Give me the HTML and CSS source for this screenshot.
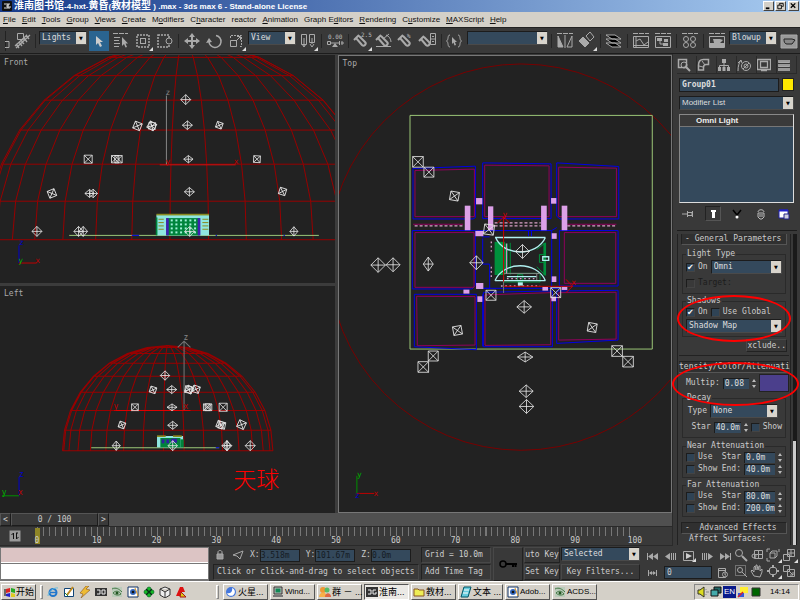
FILE: index.html
```html
<!DOCTYPE html>
<html lang="zh-CN">
<head>
    <meta charset="UTF-8">
    <meta name="viewport" content="width=device-width, initial-scale=1.0">
    <title>3ds max 6 - Stand-alone License</title>
    <link rel="stylesheet" href="styles.css">
</head>
<body>
<header class="titlebar">
    <svg class="app-icon" viewBox="0 0 10 10"><rect width="10" height="10" rx="1" fill="#111"/><path d="M2 3h4v4H2M4 5h2M8 3H6v4h2V5" fill="none" stroke="#ddd"/></svg>
    <h1><span class="cjk">淮南图书馆</span>-4-hxt-<span class="cjk">黄昏</span>(<span class="cjk">教材模型</span> ) .max - 3ds max 6 - Stand-alone License</h1>
    <div class="window-buttons">
        <button aria-label="Minimize"><svg viewBox="0 0 10 9"><path d="M2 7h4" stroke="#000" stroke-width="2"/></svg></button>
        <button aria-label="Restore"><svg viewBox="0 0 10 9"><path d="M4 3V1.500h4v3.500H7M2 3.500h4v4H2z" fill="none" stroke="#000"/></svg></button>
        <button class="close" aria-label="Close"><svg viewBox="0 0 10 9"><path d="M2 1.500l5 5M7 1.500l-5 5" stroke="#000" stroke-width="1.500"/></svg></button>
    </div>
</header>

<nav class="menubar">
    <a href="#"><u>F</u>ile</a>
    <a href="#"><u>E</u>dit</a>
    <a href="#"><u>T</u>ools</a>
    <a href="#"><u>G</u>roup</a>
    <a href="#"><u>V</u>iews</a>
    <a href="#"><u>C</u>reate</a>
    <a href="#">M<u>o</u>difiers</a>
    <a href="#">C<u>h</u>aracter</a>
    <a href="#">reactor</a>
    <a href="#"><u>A</u>nimation</a>
    <a href="#">Graph E<u>d</u>itors</a>
    <a href="#"><u>R</u>endering</a>
    <a href="#">C<u>u</u>stomize</a>
    <a href="#"><u>M</u>AXScript</a>
    <a href="#"><u>H</u>elp</a>
</nav>

<div class="toolbar">
    <svg class="handle" viewBox="0 0 6 20"><path d="M1.500 0v20" stroke="#222"/><path d="M1 10.500h4v6H1" fill="none" stroke="#aaa"/></svg>
    <button aria-label="Select and link"><svg viewBox="0 0 20 20"><path d="M5.500 2.500h6v6h-6z"/><path d="M4 17l14-13M4 13l3 4M7 11l3 4M9 9l3 4M12 7l3 4M14 4l3 4M3 15l12-11" stroke-width="1.300"/></svg></button>
    <i class="sep"></i>
    <span class="combo combo-filter"><select aria-label="Selection filter"><option>Lights</option></select></span>
    <button class="active" aria-label="Select object"><svg viewBox="0 0 20 20"><path d="M7 5v9l2-2 2 4 2-1-2-4h3z" fill="#ccc" stroke="none"/></svg></button>
    <button aria-label="Select by name"><svg viewBox="0 0 20 20"><path d="M2 2.500h5m1 0h5m1 0h3M3 6.500h6M3 9.500h5M3 12.500h6M3 15.500h5"/><path d="M11 6v9l2-2 1.500 3.500 1.500-.5-1.500-3.500h2.500z" fill="#aaa" stroke="none"/></svg></button>
    <button class="flyout" aria-label="Rectangular region"><svg viewBox="0 0 20 20"><rect x="4" y="4" width="12" height="12" stroke-dasharray="2 1" stroke-width="1.500"/><rect x="7.500" y="7.500" width="5" height="5"/></svg></button>
    <button aria-label="Window crossing"><svg viewBox="0 0 20 20"><rect x="3" y="4" width="11" height="12" stroke-dasharray="2 1" stroke-width="1.500"/><circle cx="14" cy="10" r="3" fill="#393939"/></svg></button>
    <i class="sep"></i>
    <button aria-label="Select and move"><svg viewBox="0 0 20 20"><path d="M10 4v12M4 10h12" stroke-width="2"/><path d="M10 2l3 4H7zM10 18l3-4H7zM2 10l4-3v6zM18 10l-4-3v6z" fill="#aaa" stroke="none"/></svg></button>
    <button aria-label="Select and rotate"><svg viewBox="0 0 20 20"><path d="M12 4.500a6 6 0 1 1-7 6" stroke-width="1.500"/><path d="M2 12l3-5 3 4z" fill="#aaa" stroke="none"/></svg></button>
    <button class="flyout" aria-label="Select and scale"><svg viewBox="0 0 20 20"><path d="M4.500 9.500h6v6h-6z"/><path d="M4.500 7V4.500h11v11H13" stroke-dasharray="2 1"/><path d="M10 10l4-4M11 5.500h3.500V9"/></svg></button>
    <span class="combo combo-filter"><select aria-label="Reference coordinate system"><option>View</option></select></span>
    <button class="flyout" aria-label="Use pivot point center"><svg viewBox="0 0 20 20"><path d="M3.500 3.500h5v10h-5zM11.500 3.500h5v8h-5z"/><path d="M6 7v8M4 13l2 3 2-3M14 7v6M12 13l2 3 2-3"/></svg></button>
    <i class="sep"></i>
    <button aria-label="Select and manipulate"><svg viewBox="0 0 20 20"><text x="3" y="8">0.00</text><path d="M2.500 10.500h3v3h-3zM6 12h8M14.500 10v4M17 10v4M16 12h3"/><path d="M10 12l3 4H7z" fill="#aaa" stroke="none"/></svg></button>
    <i class="sep"></i>
    <button class="flyout" aria-label="Snap toggle"><svg viewBox="0 0 20 20"><path d="M4 7l6 7c2 2 5-1 3-3L7 5M2 9l5-5" stroke-width="2"/><text x="9" y="6">2.5</text></svg></button>
    <button aria-label="Angle snap"><svg viewBox="0 0 20 20"><path d="M4 7l6 7c2 2 5-1 3-3L7 5M2 9l5-5" stroke-width="2"/><path d="M2 15.500h15M9 8l6-5M12 4c3 1 5 4 5 7"/></svg></button>
    <button aria-label="Percent snap"><svg viewBox="0 0 20 20"><path d="M4 7l6 7c2 2 5-1 3-3L7 5M2 9l5-5" stroke-width="2"/><text x="11" y="7">%</text></svg></button>
    <button aria-label="Spinner snap"><svg viewBox="0 0 20 20"><path d="M3 8l5 6c2 2 5-1 3-3L6 6M1 10l5-5" stroke-width="2"/><path d="M12.500 2.500h5v11h-5zM12.500 8h5M14 6l1-1 1 1M14 10l1 1 1-1"/></svg></button>
    <i class="sep"></i>
    <button aria-label="Named selection sets"><svg viewBox="0 0 20 20"><path d="M5 4c-3 0-1 5-3.500 6 2.500 1 .5 6 3.500 6M13 4c3 0 1 5 3.500 6-2.500 1-.5 6-3.500 6"/><path d="M7 6v7l1.500-1.500 1 3 1.500-.5-1-3h2z" fill="#aaa" stroke="none"/></svg></button>
    <span class="combo combo-wide"><select aria-label="Selection set"><option></option></select></span>
    <i class="sep"></i>
    <button aria-label="Mirror"><svg viewBox="0 0 20 20"><path d="M2 2.500h5m1 0h5m1 0h4M10 4v13"/><path d="M3 5l5 11H3z" fill="#aaa"/><path d="M17 5l-5 11h5z"/></svg></button>
    <button class="flyout" aria-label="Align"><svg viewBox="0 0 20 20"><path d="M2 10l4-4 6 6-4 4z" fill="#aaa"/><path d="M9 5l4-4 4 5-4 4z"/></svg></button>
    <i class="sep"></i>
    <button aria-label="Layer manager"><svg viewBox="0 0 20 20"><path d="M2 12h9l6 4H8zM2 8h9l6 4H8zM2 4h9l6 4H8z" fill="#000" stroke="#aaa"/></svg></button>
    <i class="sep"></i>
    <button aria-label="Curve editor"><svg viewBox="0 0 20 20"><path d="M2 2.500h5m1 0h5m1 0h4M2.500 5.500h15v11h-15zM5 5v11M5 10l4-2 4 6 4-3M3 14.500h14"/></svg></button>
    <button aria-label="Schematic view"><svg viewBox="0 0 20 20"><path d="M2 2.500h5m1 0h5m1 0h4M2.500 5.500h15v11h-15zM7 9v4h4"/><path d="M4 7h5v3H4zM11 8h4v3h-4zM10 12h5v3h-5z" fill="#aaa" stroke="none"/></svg></button>
    <i class="sep"></i>
    <button aria-label="Material editor"><svg viewBox="0 0 20 20"><path d="M2 2.500h5m1 0h5m1 0h4"/><circle cx="6" cy="8" r="2.500"/><circle cx="13" cy="8" r="2.500"/><circle cx="6" cy="14" r="2.500"/><circle cx="13" cy="14" r="2.500"/></svg></button>
    <i class="sep"></i>
    <button aria-label="Render scene"><svg viewBox="0 0 20 20"><path d="M2 2.500h5m1 0h5m1 0h4M2.500 5.500h15v11h-15z"/><path d="M3 12h14v4H3zM6 8h7l3 1-3 3H7z" fill="#aaa" stroke="none"/></svg></button>
    <span class="combo combo-filter"><select aria-label="Render type"><option>Blowup</option></select></span>
    <button aria-label="Quick render"><svg viewBox="0 0 20 20"><path d="M2 4h16v13H2z" fill="#999"/><path d="M5 8h8l3 1-3 4H8c-3 0-3-4-3-5z" stroke="#222" fill="#888"/></svg></button>
</div>

<main class="workspace">
    <section class="stage">
        <div class="views">
            <div class="view"><span class="view-name">Front</span><svg class="scene" id="front" viewBox="0 0 1005 687" preserveAspectRatio="xMinYMin slice"></svg></div>
            <div class="view"><span class="view-name">Left</span><svg class="scene" id="left" viewBox="0 3 1005 681" preserveAspectRatio="xMinYMin slice"></svg></div>
            <div class="view view-top"><span class="view-name">Top</span><svg class="scene" id="top" viewBox="-63 -135 996 1374"></svg></div>
        </div>
        <div class="time-slider">
            <button aria-label="Previous frame">&lt;</button>
            <button class="thumb">0 / 100</button>
            <button aria-label="Next frame">&gt;</button>
        </div>
        <div class="trackbar">
            <button class="mini-curve" aria-label="Mini curve editor"><svg viewBox="0 0 12 12"><path d="M.5.500h11v11H.5z" fill="#999"/><path d="M4.500 9V3M2.500 5l2-2M7.500 3v6M9.500 7l-2 2M7 3h2" stroke="#111" fill="none"/></svg></button>
            <div class="ruler">
                <div class="ticks"></div>
                <i class="time-mark"></i>
                <div class="numbers"><span>0</span><span>10</span><span>20</span><span>30</span><span>40</span><span>50</span><span>60</span><span>70</span><span>80</span><span>90</span><span>100</span></div>
            </div>
        </div>
    </section>

    <aside class="panel">
        <div class="panel-tabs">
            <button aria-label="Create"><svg viewBox="0 0 14 14"><path d="M1.500 1.500h8v8h-8z" stroke-width="1.500"/><circle cx="7" cy="7" r="3"/><path d="M8 8l5 5" stroke-width="2"/></svg></button>
            <button aria-label="Modify"><svg viewBox="0 0 14 14"><path d="M1.500 12V7c0-4 2-5.500 5-5.500h5v5H9c-2 0-2.500 1-2.500 3V12z" stroke-width="1.500"/><path d="M2 8l4 1M5 3l3 4"/></svg></button>
            <button aria-label="Hierarchy"><svg viewBox="0 0 14 14"><path d="M7 4v6M2.500 10V7.500h9V10"/><path d="M5 1h4v4H5zM1 9h3v4H1zM5.500 9h3v4h-3zM10 9h3v4h-3z" fill="#aaa" stroke="none"/></svg></button>
            <button aria-label="Motion"><svg viewBox="0 0 14 14"><circle cx="9" cy="8" r="4.500"/><circle cx="9" cy="8" r="2"/><path d="M6 11l6-6M1 13c0-5 1-8 3-11M1 5l3-3 1 3"/></svg></button>
            <button aria-label="Display"><svg viewBox="0 0 14 14"><path d="M.5 1.500h13v10H.5zM3.500 3.500h7v6h-7zM4 12.500h6" stroke-width="1.300"/></svg></button>
            <button aria-label="Utilities"><svg viewBox="0 0 14 14"><path d="M1 2h12v3H1zM1 6h12v3H1zM1 10h12v3H1z" fill="#999" stroke="none"/><path d="M2 4.500h10M2 8.500h10"/></svg></button>
        </div>
        <div class="object-name">
            <input type="text" value="Group01" aria-label="Object name">
            <button class="swatch yellow" aria-label="Object color"></button>
        </div>
        <span class="combo modifier-list"><select aria-label="Modifier list"><option>Modifier List</option></select></span>
        <div class="stack"><div class="stack-item">Omni Light</div></div>
        <div class="stack-tools">
            <button aria-label="Pin stack"><svg viewBox="0 0 14 14"><path d="M1 7h5M6.500 4v6M7 5.500h4v3H7M11.500 4v6"/></svg></button>
            <button class="boxed" aria-label="Show end result"><svg viewBox="0 0 14 14"><path d="M5 3h5v2H9v6H6V5H5z" fill="#fff" stroke="none"/></svg></button>
            <button aria-label="Make unique"><svg viewBox="0 0 14 14"><path d="M3 3l4 5 4-5M7 7v2" stroke="#000" stroke-width="1.500"/><circle cx="7" cy="10" r="1.500" fill="#fff" stroke="none"/></svg></button>
            <button aria-label="Remove modifier"><svg viewBox="0 0 14 14"><path d="M4 6h6v4l-2 2H6l-2-2zM4 5c0-3 6-3 6 0M6 7v3M8 7v3" stroke="#bbb"/></svg></button>
            <button aria-label="Configure modifier sets"><svg viewBox="0 0 14 14"><path d="M2 3h9v8H2z" fill="#fff" stroke="#22a"/><path d="M2 3.500h9" stroke="#22c" stroke-width="2"/><path d="M7 7h5v5H7z" fill="#ccd" stroke="#228"/></svg></button>
        </div>

        <div class="rollouts">
            <div class="rollout-body">
                <div class="rollout-head first">- General Parameters</div>
                <fieldset>
                    <legend>Light Type</legend>
                    <div class="row">
                        <label><input type="checkbox" checked>On</label>
                        <span class="combo"><select aria-label="Light type"><option>Omni</option></select></span>
                    </div>
                    <div class="row"><label class="disabled"><input type="checkbox" disabled>Target:</label></div>
                </fieldset>
                <fieldset>
                    <legend>Shadows</legend>
                    <div class="row low"><label><input type="checkbox" checked>On</label><label><input type="checkbox">Use Global</label></div>
                    <div class="row"><span class="combo"><select aria-label="Shadow type"><option>Shadow Map</option></select></span></div>
                </fieldset>
                <button class="exclude">xclude..</button>
                <hr>
                <div class="rollout-head wide">tensity/Color/Attenuati</div>
                <div class="row multiplier">
                    <label for="mult">Multip:</label>
                    <input class="num" type="text" id="mult" value="0.08"><i class="spin"></i>
                    <button class="swatch violet" aria-label="Light color"></button>
                </div>
                <fieldset class="decay">
                    <legend>Decay</legend>
                    <div class="row right"><label for="decay">Type</label><span class="combo"><select id="decay"><option>None</option></select></span></div>
                    <div class="row right"><label for="dstart">Star</label><input class="num" type="text" id="dstart" value="40.0m"><i class="spin"></i><label><input type="checkbox">Show</label></div>
                </fieldset>
                <fieldset>
                    <legend>Near Attenuation</legend>
                    <div class="row low"><label><input type="checkbox">Use</label><label class="edge" for="ns">Star</label><input class="num" type="text" id="ns" value="0.0m"><i class="spin"></i></div>
                    <div class="row low"><label><input type="checkbox">Show</label><label class="edge" for="ne">End:</label><input class="num" type="text" id="ne" value="40.0m"><i class="spin"></i></div>
                </fieldset>
                <fieldset>
                    <legend>Far Attenuation</legend>
                    <div class="row low"><label><input type="checkbox">Use</label><label class="edge" for="fs">Star</label><input class="num" type="text" id="fs" value="80.0m"><i class="spin"></i></div>
                    <div class="row low"><label><input type="checkbox">Show</label><label class="edge" for="fe">End:</label><input class="num" type="text" id="fe" value="200.0m"><i class="spin"></i></div>
                </fieldset>
                <div class="rollout-head advanced">- &nbsp;Advanced Effects</div>
                <div class="cut">Affect Surfaces:</div>
            </div>
            <div class="scroll"><i></i></div>
        </div>
        <i class="ring ring-shadows"></i>
        <i class="ring ring-color"></i>
    </aside>
</main>

<footer class="status">
    <div class="listener"><div class="pink"></div><div class="white"></div></div>
    <div class="info">
        <div class="coords">
            <button aria-label="Lock selection"><svg viewBox="0 0 12 12"><path d="M4 5V3c0-2 4-2 4 0v2"/><path d="M3 5h6v5H3z" fill="#999"/></svg></button>
            <button aria-label="Transform type-in"><svg viewBox="0 0 12 12"><path d="M1 6l10-4-3 8-3-3z"/></svg></button>
            <label>X:<input type="text" value="3.518m"></label>
            <label>Y:<input type="text" value="101.67m"></label>
            <label>Z:<input type="text" value="0.0m"></label>
        </div>
        <div class="cell">Grid = 10.0m</div>
        <div class="cell">Click or click-and-drag to select objects</div>
        <div class="cell">Add Time Tag</div>
    </div>
    <button class="set-keys" aria-label="Set keys"><svg viewBox="0 0 20 12"><circle cx="5" cy="6" r="3" fill="none" stroke="#000" stroke-width="1.500"/><path d="M8 6h11M15 6v3M17.500 6v3" stroke="#000" stroke-width="2"/></svg></button>
    <div class="keys">
        <button>uto Key</button>
        <span class="combo"><select aria-label="Key selection"><option>Selected</option></select></span>
        <button>Set Key</button>
        <button>Key Filters...</button>
    </div>
    <div class="playback">
        <div class="play-row">
            <button aria-label="Go to start"><svg viewBox="0 0 14 12"><path d="M1.500 3v7"/><path d="M7 3v7L2 6.500zM12 3v7L7 6.500z" fill="#aaa" stroke="none"/></svg></button>
            <button aria-label="Previous"><svg viewBox="0 0 14 12"><path d="M6 3v7L1 6.500z" fill="#aaa" stroke="none"/><path d="M7.500 3v7M9.500 3v7M11.500 3v7"/></svg></button>
            <button class="flyout" aria-label="Play"><svg viewBox="0 0 14 12"><path d="M1.500 1.500h10v9h-10z"/><path d="M4 3l6 3-6 3z" fill="#ccc" stroke="none"/></svg></button>
            <button aria-label="Next"><svg viewBox="0 0 14 12"><path d="M8 3v7l5-3.500z" fill="#aaa" stroke="none"/><path d="M2.500 3v7M4.500 3v7M6.500 3v7"/></svg></button>
            <button aria-label="Go to end"><svg viewBox="0 0 14 12"><path d="M12.500 3v7"/><path d="M2 3v7l5-3.500zM7 3v7l5-3.500z" fill="#aaa" stroke="none"/></svg></button>
        </div>
        <div class="play-row">
            <button aria-label="Key mode"><svg viewBox="0 0 14 12"><path d="M2.500 3v6M10.500 3v6M4 6h5"/><path d="M6 4v4L3 6zM7 4v4l3-2z" fill="#aaa" stroke="none"/></svg></button>
            <input type="text" value="0" aria-label="Current frame">
            <button aria-label="Time configuration"><svg viewBox="0 0 14 12"><path d="M2.500 1.500h7v9h-7zM2 3.500h8"/><circle cx="9" cy="7.500" r="2.500" fill="#393939"/><path d="M9 6v2h1"/></svg></button>
        </div>
    </div>
    <div class="nav">
        <button aria-label="Zoom"><svg viewBox="0 0 14 14"><circle cx="5" cy="5" r="3.500"/><path d="M8 8l5 5" stroke-width="2"/></svg></button>
        <button aria-label="Zoom all"><svg viewBox="0 0 14 14"><path d="M4.500 2.500h8v8h-8zM8.500 2v9M4 6.500h9"/><circle cx="4" cy="8" r="2"/></svg></button>
        <button class="flyout" aria-label="Zoom extents"><svg viewBox="0 0 14 14"><path d="M4 5h5v5H4zM4 5l2-2h5v5L9 10M1 4V1h3M13 1v3M1 10v3h3"/></svg></button>
        <button class="flyout" aria-label="Zoom extents all"><svg viewBox="0 0 14 14"><path d="M5.500 1.500h7v7h-7zM9 1v8M5 5h8M1.500 6.500h6v6h-6z"/></svg></button>
        <button aria-label="Region zoom"><svg viewBox="0 0 14 14"><path d="M1.500 1.500h10v10h-10z" stroke-dasharray="1 1"/><circle cx="6" cy="6" r="2.500"/><path d="M8 8l5 5"/></svg></button>
        <button aria-label="Pan"><svg viewBox="0 0 14 14"><path d="M4 12L1 7l1-1 2 2V3l1-1 1 4V1h1l1 5 1-4h1v5l2-2v3l-2 5z"/></svg></button>
        <button class="flyout" aria-label="Arc rotate"><svg viewBox="0 0 14 14"><circle cx="7" cy="7" r="4"/><path d="M7 1v3M7 10v3M1 7h3M10 7h3" stroke-width="2"/></svg></button>
        <button aria-label="Maximize viewport"><svg viewBox="0 0 14 14"><path d="M1.500 1.500h6v6h-6zM5.500 5.500h7v7h-7zM7 7l4 4M11 8v3H8"/></svg></button>
    </div>
</footer>

<div class="taskbar">
    <button class="start"><svg viewBox="0 0 12 12"><path d="M2 3l4-1v4L2 7z" fill="#d22"/><path d="M7 2l4 1v4L7 6z" fill="#2a2"/><path d="M2 8l4-1v4l-4-1z" fill="#22c"/><path d="M7 7l4 1v3H7z" fill="#dc2"/><path d="M1 3v7" stroke="#000"/></svg>开始</button>
    <i class="grip"></i>
    <div class="quick">
        <a href="#" aria-label="Internet Explorer"><svg viewBox="0 0 12 12"><circle cx="6" cy="6.500" r="3.500" fill="none" stroke="#27c" stroke-width="2"/><path d="M3 6.500h6" stroke="#27c" stroke-width="1.500"/><path d="M1 10C1 6 7 1 11 2" fill="none" stroke="#6bd"/></svg></a>
        <a href="#" aria-label="Desktop"><svg viewBox="0 0 12 12"><path d="M1.500 2.500h9v8h-9z" fill="#fff" stroke="#147"/><path d="M4 9l6-8" stroke="#b82" stroke-width="2"/><path d="M2 7l3 3" stroke="#283"/></svg></a>
        <a href="#" aria-label="Winamp"><svg viewBox="0 0 12 12"><path d="M7 0L1 7l3 1-2 4 9-8-4-1 3-3z" fill="#eb3" stroke="#852" stroke-width=".6"/></svg></a>
        <a href="#" aria-label="3ds max"><svg viewBox="0 0 12 12"><path d="M0 2h12v8H0z" fill="#333"/><path d="M2 4h3v4H2M7 4h3v4H7z" fill="none" stroke="#eee"/></svg></a>
        <a href="#" aria-label="ACDSee"><svg viewBox="0 0 12 12"><path d="M1 1h10v10H1z" fill="#bcb"/><path d="M1 3c4-2 7 0 10 3M2 7c3-3 6-2 8 1-3 2-6 1-8-1z" fill="none" stroke="#474"/><circle cx="6" cy="7" r="1.500" fill="#252"/></svg></a>
        <a href="#" aria-label="Photoshop"><svg viewBox="0 0 12 12"><path d="M1 1h10v10H1z" fill="#fff" stroke="#136"/><circle cx="6" cy="6" r="3" fill="#36b"/><circle cx="6" cy="6" r="1.300" fill="#111"/><path d="M8 2l3 8" stroke="#d92"/></svg></a>
        <a href="#" aria-label="Messenger"><svg viewBox="0 0 12 12"><g fill="#1b2" stroke="#052" stroke-width=".6"><circle cx="6" cy="3" r="2"/><circle cx="6" cy="9" r="2"/><circle cx="3" cy="6" r="2"/><circle cx="9" cy="6" r="2"/></g><path d="M3 3l6 6M9 3l-6 6" stroke="#031" stroke-width="1.200"/></svg></a>
        <a href="#" aria-label="Cube"><svg viewBox="0 0 12 12"><path d="M6 1l5 2v6l-5 3-5-3V3zM1 3l5 3 5-3M6 6v6" fill="#eee" stroke="#333"/></svg></a>
        <a href="#" aria-label="AutoCAD"><svg viewBox="0 0 12 12"><path d="M1 10L5 1h3l2 5H6l-1 4z" fill="#d11"/><path d="M6 6l5 5-6 0z" fill="#dc1" stroke="#a11"/></svg></a>
    </div>
    <i class="grip"></i>
    <div class="tasks">
        <button><svg viewBox="0 0 12 12"><circle cx="6" cy="6" r="5" fill="#47d"/><path d="M7 2a4 4 0 1 1-5 5c3 1 6-1 5-5z" fill="#fff"/></svg>火星...</button>
        <button class="latin"><svg viewBox="0 0 12 12"><path d="M2 1h8v7H2z" fill="#bbb" stroke="#333"/><path d="M3.500 2.500h5v4h-5z" fill="#185"/><path d="M1 9h10v2H1z" fill="#777"/></svg>Wind...</button>
        <button><svg viewBox="0 0 12 12"><circle cx="4" cy="4" r="3" fill="#e93"/><circle cx="8" cy="4" r="2.500" fill="#5b6"/><path d="M0 11c0-6 8-6 8 0z" fill="#f6b04a"/><path d="M6 11c0-5 6-5 6 0z" fill="#d64"/></svg>群 － ...</button>
        <button class="current"><svg viewBox="0 0 12 12"><path d="M0 1h12v10H0z" fill="#333"/><path d="M2 4h3v4H2M10 4H7v4h3V6" fill="none" stroke="#eee"/></svg>淮南...</button>
        <button><svg viewBox="0 0 12 12"><path d="M1 3h4l1 1h5v6H1z" fill="#ee5" stroke="#852"/></svg>教材...</button>
        <button><svg viewBox="0 0 12 12"><path d="M4 1h7L8 11H1z" fill="#6cd" stroke="#056"/><path d="M4 4h5M3 7h5" stroke="#fff"/></svg>文本 ...</button>
        <button class="latin"><svg viewBox="0 0 12 12"><path d="M1 1h10v10H1z" fill="#fff" stroke="#136"/><circle cx="6" cy="6" r="3" fill="#36b"/><circle cx="6" cy="6" r="1.300" fill="#111"/><path d="M8 2l3 8" stroke="#d92"/></svg>Adob...</button>
        <button class="latin"><svg viewBox="0 0 12 12"><path d="M1 1h10v10H1z" fill="#bcb"/><path d="M1 3c4-2 7 0 10 3M2 7c3-3 6-2 8 1-3 2-6 1-8-1z" fill="none" stroke="#474"/><circle cx="6" cy="7" r="1.500" fill="#252"/></svg>ACDS...</button>
    </div>
    <div class="tray">
        <svg viewBox="0 0 12 12"><path d="M1 4h2l4-3v10L3 8H1z" fill="#dd2" stroke="#332"/><path d="M9 3v1M9 8v1M9 6h3" stroke="#888"/></svg>
        <svg viewBox="0 0 12 12"><path d="M4 1h7v6H4z" fill="#266" stroke="#111"/><path d="M1 4h7v6H1z" fill="#4aa" stroke="#111"/></svg>
        <span class="lang">EN</span>
        <svg viewBox="0 0 12 12"><path d="M3 1h8v6H3z" fill="#fe3"/><path d="M1 7h6v4H1z" fill="#35d"/><path d="M1 11l5-5" stroke="#d22" stroke-width="1.500"/></svg>
        <svg viewBox="0 0 12 12"><path d="M2 2h8v8H2z" fill="#060" stroke="#333"/></svg>
        <time>14:14</time>
    </div>
</div>
<script src="scene.js"></script>
</body>
</html>
```
FILE: styles.css
```css
* {
    margin: 0;
    padding: 0;
    box-sizing: border-box;
}

body {
    display: flex;
    flex-direction: column;
    height: 100vh;
    overflow: hidden;
    background-color: #393939;
    color: #ccc;
    font: 8px/10px "DejaVu Sans Mono", monospace;
}

button, input, select {
    font: inherit;
    color: inherit;
    border: none;
    background: none;
    border-radius: 0;
    min-width: 0;
    appearance: none;
}

input:focus, select:focus {
    outline: none;
}

svg {
    display: block;
    fill: none;
    stroke: none;
}

/* title and menu */
.titlebar {
    display: flex;
    align-items: center;
    height: 12px;
    padding: 0 1px 0 2px;
    background: linear-gradient(90deg, #163a8a, #a6caf0);
    color: #fff;
}

.app-icon {
    width: 10px;
    height: 10px;
    margin-right: 2px;
}

.titlebar h1 {
    flex: 1;
    font: bold 8px/12px "Liberation Sans", "Noto Sans CJK SC", sans-serif;
    white-space: pre;
}

.titlebar .cjk {
    font-size: 10px;
}

.window-buttons {
    display: flex;
    gap: 1px;
}

.window-buttons button {
    width: 11px;
    height: 10px;
    background-color: #d4d0c8;
    border: 1px solid;
    border-color: #fff #444 #444 #fff;
}

.window-buttons .close {
    margin-left: 1px;
}

.menubar {
    display: flex;
    gap: 6px;
    height: 15px;
    padding: 0 3px;
    background-color: #d4d0c8;
    font: 8px/15px "Liberation Sans", sans-serif;
}

.menubar a {
    color: #111;
    text-decoration: none;
}

/* combos */
.combo {
    position: relative;
    display: block;
    min-width: 0;
    height: 14px;
    background-color: #34495c;
    border: 1px solid;
    border-color: #1c1c1c #4a4a4a #4a4a4a #1c1c1c;
}

.combo select {
    display: block;
    width: 100%;
    height: 12px;
    padding: 0 2px;
    line-height: 12px;
    color: #ddd;
}

.combo::after {
    content: "▼";
    position: absolute;
    top: 0;
    right: 0;
    width: 10px;
    height: 12px;
    background-color: #d8d4cc;
    color: #000;
    font: 5px/12px "DejaVu Sans", sans-serif;
    text-align: center;
    pointer-events: none;
}

/* main toolbar */
.toolbar {
    display: flex;
    gap: 2px;
    height: 27px;
    padding: 3px 1px 4px 4px;
    border-top: 1px solid #222;
    border-bottom: 1px solid #1c1c1c;
}

.toolbar button {
    position: relative;
    flex: none;
    width: 20px;
    height: 20px;
}

.toolbar button svg {
    width: 20px;
    height: 20px;
    stroke: #aaa;
}

.toolbar text {
    font-size: 6px;
    fill: #bbb;
    stroke: none;
}

.toolbar .active {
    background-color: #2a6490;
}

.flyout {
    position: relative;
}

.flyout::after {
    content: "";
    position: absolute;
    right: 0;
    bottom: 0;
    border: 2px solid;
    border-color: transparent #ddd #ddd transparent;
}

.toolbar .handle {
    flex: none;
    width: 6px;
    height: 20px;
}

.sep {
    flex: none;
    width: 1px;
    height: 14px;
    margin: 3px 1px 0;
    background-color: #252525;
}

.combo-filter {
    flex: none;
    width: 48px;
}

.combo-wide {
    flex: 1;
}

/* viewports */
.workspace {
    flex: 1;
    display: flex;
    min-height: 0;
}

.stage {
    flex: 1;
    display: flex;
    flex-direction: column;
    min-width: 0;
}

.views {
    flex: 1;
    display: grid;
    grid-template-columns: 1fr 1fr;
    grid-template-rows: 1fr 1fr;
    gap: 3px;
    min-height: 0;
    padding-top: 1px;
    background-color: #3c3c3c;
}

.view {
    position: relative;
    overflow: hidden;
    background-color: #222;
}

.view-top {
    grid-row: 1 / 3;
    grid-column: 2;
    border: 1px solid #777;
}

.view-name {
    position: absolute;
    top: 3px;
    left: 4px;
    color: #aaa;
}

.scene {
    width: 100%;
    height: 100%;
}

.scene text {
    font: 24px "DejaVu Sans Mono", monospace;
}

.scene .caption {
    font: 300 69px "Noto Sans CJK SC", sans-serif;
    fill: #f00;
}

/* time slider and track bar */
.time-slider {
    display: flex;
    height: 14px;
    background-color: #505050;
    border-bottom: 1px solid #2a2a2a;
}

.time-slider button {
    width: 11px;
    background-color: #3a3a3a;
    border: 1px solid;
    border-color: #555 #1c1c1c #1c1c1c #555;
}

.time-slider .thumb {
    width: 87px;
}

.trackbar {
    display: flex;
    height: 19px;
    border-bottom: 1px solid #2a2a2a;
}

.mini-curve {
    width: 12px;
    height: 12px;
    margin: 3px 6px 0 9px;
}

.ruler {
    position: relative;
    flex: 1;
    margin-right: 27px;
}

.ticks {
    height: 9px;
    margin: 0 10px;
    background: repeating-linear-gradient(90deg, #777 0 1px, transparent 1px 1%);
}

.time-mark {
    position: absolute;
    top: 1px;
    left: 8px;
    width: 5px;
    height: 16px;
    background-color: #8f8626;
}

.numbers {
    position: relative;
    display: flex;
    justify-content: space-between;
}

.numbers span {
    width: 20px;
    text-align: center;
}

/* command panel */
.panel {
    position: relative;
    flex: none;
    display: flex;
    flex-direction: column;
    width: 128px;
    padding: 2px 3px 1px 4px;
    border-left: 1px solid #2a2a2a;
}

.panel-tabs {
    display: flex;
    height: 18px;
    border-bottom: 1px solid #2a2a2a;
}

.panel-tabs button {
    flex: 1;
    border-right: 1px solid #2a2a2a;
}

.panel-tabs svg {
    width: 14px;
    height: 14px;
    stroke: #aaa;
}

.object-name {
    display: flex;
    gap: 3px;
    height: 14px;
    margin: 4px 3px 4px 2px;
}

.object-name input {
    flex: 1;
    padding: 0 2px;
    background-color: #34495c;
    border: 1px solid #1c1c1c;
    color: #ddd;
    font-weight: bold;
}

.swatch {
    flex: none;
    width: 12px;
    height: 13px;
    border: 1px solid #222;
}

.yellow {
    background-color: #ffe800;
}

.violet {
    background-color: #4b3f8c;
}

.modifier-list {
    flex: none;
    margin: 0 3px 4px 2px;
    font-family: "Liberation Sans", sans-serif;
}

.stack {
    flex: none;
    height: 89px;
    margin: 0 3px 3px 2px;
    background-color: #34495c;
    border: 1px solid #ddd;
    border-top-color: #888;
    border-left-color: #888;
}

.stack-item {
    height: 12px;
    padding-left: 16px;
    background-color: #3a3a3a;
    border-bottom: 1px solid #777;
    color: #eee;
    font: bold 8px/12px "Liberation Sans", sans-serif;
}

.stack-tools {
    flex: none;
    display: flex;
    justify-content: space-between;
    height: 25px;
    padding: 0 6px 9px 4px;
    border-bottom: 1px solid #1c1c1c;
}

.stack-tools svg {
    width: 14px;
    height: 14px;
    stroke: #aaa;
}

.boxed {
    border: 1px solid;
    border-color: #222 #555 #555 #222;
}

.rollouts {
    flex: 1;
    display: flex;
    gap: 2px;
    min-height: 0;
    margin-top: 3px;
}

.rollout-body {
    flex: 1;
    min-width: 0;
    overflow: hidden;
    padding: 0 1px;
    border-left: 1px solid #222;
    border-right: 1px solid #222;
}

.scroll {
    display: flex;
    align-items: flex-end;
    width: 4px;
    background-color: #1a1a1a;
}

.scroll i {
    width: 3px;
    height: 104px;
    background-color: #ccc;
}

.rollout-head {
    height: 12px;
    margin: 0 2px;
    padding-left: 3px;
    border: 1px solid;
    border-color: #222 #555 #555 #222;
    background-color: #303030;
    line-height: 10px;
    white-space: nowrap;
}

.rollout-head.first {
    height: 11px;
    border-top: none;
    margin-bottom: 4px;
}

.rollout-head.wide {
    margin: 0;
    padding: 0;
    border-width: 1px 0;
}

.rollout-head.advanced {
    margin-top: 5px;
}

fieldset {
    margin: 0 3px 2px;
    padding: 0 3px 2px;
    border: 1px solid #2a2a2a;
    min-width: 0;
}

legend {
    height: 10px;
    padding: 0 1px;
    line-height: 10px;
}

.row {
    display: flex;
    align-items: center;
    gap: 3px;
    height: 16px;
    white-space: nowrap;
}

.row.low {
    height: 12px;
}

.row .combo {
    flex: 1;
}

.row label {
    display: flex;
    align-items: center;
    gap: 3px;
}

.row .disabled {
    color: #1c1c1c;
}

input[type="checkbox"] {
    width: 9px;
    height: 9px;
    background-color: #2f4355;
    border: 1px solid;
    border-color: #1c1c1c #444 #444 #1c1c1c;
    color: #fff;
    font: 8px/7px "DejaVu Sans", sans-serif;
}

input[type="checkbox"]:disabled {
    background: none;
}

input[type="checkbox"]:checked::before {
    content: "✔";
}

.num {
    flex: none;
    width: 31px;
    height: 11px;
    padding-left: 1px;
    background-color: #34495c;
    border-top: 1px solid #1c1c1c;
    border-left: 1px solid #1c1c1c;
    color: #ddd;
}

.spin {
    flex: none;
    display: flex;
    flex-direction: column;
    justify-content: space-between;
    height: 9px;
}

.spin::before, .spin::after {
    content: "";
    border: 2px solid transparent;
}

.spin::before {
    border-top: none;
    border-bottom: 3px solid #bbb;
}

.spin::after {
    border-bottom: none;
    border-top: 3px solid #bbb;
}

.exclude {
    display: block;
    height: 13px;
    margin: 0 2px 0 auto;
    border: 1px solid;
    border-color: #484848 #222 #222 #484848;
    line-height: 10px;
}

hr {
    margin: 3px 0 5px;
    border: none;
    border-top: 1px solid #222;
}

.multiplier {
    height: 20px;
    padding: 0 5px 0 7px;
}

.multiplier .num {
    width: 26px;
}

.multiplier .violet {
    width: 30px;
    height: 18px;
    margin-left: auto;
}

.decay {
    margin-bottom: 3px;
}

.decay .combo {
    flex: none;
    width: 68px;
    margin-right: 4px;
}

.decay .num {
    width: 27px;
}

.right {
    justify-content: flex-end;
}

.row .edge {
    margin-left: auto;
}

.cut {
    padding-left: 10px;
}

/* marker pen rings over the panel */
.ring {
    position: absolute;
    border: 2px solid #f00;
    border-radius: 50%;
    pointer-events: none;
}

.ring-shadows {
    top: 241px;
    left: 4px;
    width: 114px;
    height: 47px;
}

.ring-color {
    top: 308px;
    left: -1px;
    width: 127px;
    height: 44px;
}

/* status area */
.status {
    display: flex;
    height: 35px;
    padding-top: 1px;
}

.status svg {
    stroke: #aaa;
}

.listener {
    width: 209px;
    padding: 1px;
    background-color: #777;
}

.listener .pink {
    height: 15px;
    background-color: #dcc4c4;
    border-bottom: 1px solid #fff;
}

.listener .white {
    height: 15px;
    margin-top: 1px;
    background-color: #fff;
}

.info {
    flex: 1;
    display: grid;
    grid-template-columns: 1fr 70px;
    grid-template-rows: 16px 16px;
    gap: 1px 2px;
    min-width: 0;
    margin: 0 2px 0 4px;
}

.cell {
    padding-left: 3px;
    border: 1px solid;
    border-color: #222 #484848 #484848 #222;
    line-height: 14px;
    white-space: nowrap;
}

.coords {
    display: flex;
    align-items: center;
    gap: 6px;
    padding-left: 1px;
}

.coords button, .coords svg {
    width: 12px;
    height: 12px;
}

.coords label {
    display: flex;
    align-items: center;
}

.coords input {
    width: 40px;
    height: 13px;
    background-color: #34495c;
    border: 1px solid #1c1c1c;
    color: #141c24;
}

.set-keys {
    width: 30px;
    padding: 4px;
    border: 1px solid;
    border-color: #484848 #222 #222 #484848;
}

.keys {
    display: grid;
    grid-template-columns: 36px 79px;
    grid-template-rows: 16px 16px;
    gap: 1px;
    margin-left: 1px;
}

.keys button {
    border: 1px solid;
    border-color: #484848 #222 #222 #484848;
    white-space: nowrap;
}

.playback {
    width: 88px;
    margin-left: 6px;
}

.play-row {
    display: flex;
    align-items: center;
    gap: 4px;
    height: 17px;
}

.play-row svg {
    width: 14px;
    height: 12px;
}

.play-row input {
    width: 48px;
    height: 13px;
    padding: 0 2px;
    background-color: #34495c;
    border: 1px solid #1c1c1c;
}

.nav {
    display: grid;
    grid-template-columns: repeat(4, 16px);
    grid-template-rows: 16px 16px;
    padding-right: 2px;
}

.nav svg {
    width: 14px;
    height: 14px;
}

/* windows taskbar */
.taskbar {
    display: flex;
    align-items: center;
    height: 19px;
    padding: 1px 1px 0;
    background-color: #d4d0c8;
    border-top: 1px solid #fff;
    color: #000;
    font: 9px/12px "Liberation Sans", "Noto Sans CJK SC", sans-serif;
}

.taskbar svg {
    flex: none;
    width: 12px;
    height: 12px;
}

.start, .tasks button {
    display: flex;
    align-items: center;
    height: 16px;
    border: 1px solid;
    border-color: #fff #555 #555 #fff;
    white-space: nowrap;
}

.start {
    width: 35px;
    padding-left: 2px;
}

.grip {
    width: 3px;
    height: 14px;
    margin: 0 4px;
    border: 1px solid;
    border-color: #fff #888 #888 #fff;
}

.quick {
    display: flex;
    gap: 4px;
    width: 165px;
}

.tasks {
    flex: 1;
    display: flex;
    gap: 2px;
}

.tasks button {
    width: 45px;
    padding-left: 1px;
    gap: 1px;
}

.tasks .latin {
    font-size: 8px;
}

.tasks .current {
    background-color: #ebe9e5;
    border-color: #555 #fff #fff #555;
}

.tray {
    display: flex;
    align-items: center;
    gap: 1px;
    width: 105px;
    height: 16px;
    padding-left: 2px;
    border: 1px solid;
    border-color: #888 #fff #fff #888;
}

.tray .lang {
    padding: 0 1px;
    background-color: #0a1a8a;
    color: #fff;
    font-size: 8px;
}

.tray time {
    margin-left: auto;
    padding-right: 8px;
    font-size: 8px;
}
```
FILE: scene.js
```js
const NS = 'http://www.w3.org/2000/svg';

function add(svg, tag, attrs, text) {
    const el = document.createElementNS(NS, tag);
    for (const key in attrs) el.setAttribute(key, attrs[key]);
    if (text) el.textContent = text;
    svg.appendChild(el);
    return el;
}

function path(svg, d, stroke, width = 3, fill = 'none') {
    add(svg, 'path', { d, stroke, fill, 'stroke-width': width });
}

function rects(svg, fill, list) {
    list.forEach(([x, y, width, height]) => add(svg, 'rect', { x, y, width, height, fill }));
}

// half sphere with 32 segments, seen from the side
function dome(svg, cx, base, r, turn) {
    const step = Math.PI / 16;
    let d = '';
    for (let lat = 0; lat < 8; lat++) {
        const y = base - r * Math.sin(lat * step);
        const w = r * Math.cos(lat * step);
        d += `M${cx - w} ${y}H${cx + w}`;
    }
    for (let m = -7; m <= 8; m++) {
        const a = m * step + turn;
        for (let lat = 0; lat <= 8; lat++) {
            const x = cx + r * Math.cos(lat * step) * Math.sin(a);
            const y = base - r * Math.sin(lat * step);
            d += `${lat ? 'L' : 'M'}${x} ${y}`;
        }
    }
    // outline on both sides
    [-1, 1].forEach(side => {
        for (let lat = 0; lat <= 8; lat++) {
            d += `${lat ? 'L' : 'M'}${cx + side * r * Math.cos(lat * step)} ${base - r * Math.sin(lat * step)}`;
        }
    });
    path(svg, d, '#980000');
}

// omni lights: [x, y, half width, half height]
function diamonds(svg, list) {
    list.forEach(([x, y, w, h]) => {
        path(svg, `M${x - w} ${y}L${x} ${y - h}L${x + w} ${y}L${x} ${y + h}ZM${x - w} ${y}H${x + w}M${x} ${y - h}V${y + h}`, '#e6e6e6', 2.5);
    });
}

// the same lights seen turned: [x, y, half size, angle]
function boxes(svg, list) {
    list.forEach(([x, y, s, angle]) => {
        add(svg, 'path', {
            d: `M${-s} ${-s}H${s}V${s}H${-s}ZL${s} ${s}M${s} ${-s}L${-s} ${s}`,
            transform: `translate(${x} ${y}) rotate(${angle})`,
            stroke: '#e6e6e6', 'stroke-width': 2.5, fill: 'none'
        });
    });
}

function label(svg, x, y, text, fill) {
    add(svg, 'text', { x, y, fill }, text);
}

const front = document.getElementById('front');
dome(front, 552, 555, 593, -0.07);
path(front, 'M208 542H958', '#9cc878');
path(front, 'M396 542h22M648 542h4M852 542h4', '#0000e0');
rects(front, '#8fe6e0', [[470, 480, 158, 62]]);
rects(front, '#00843c', [[500, 490, 100, 52], [468, 488, 5, 54]]);
rects(front, '#8a8a20', [[470, 477, 158, 5], [476, 492, 16, 3], [476, 502, 16, 3], [476, 512, 16, 3], [476, 522, 16, 3], [608, 492, 18, 3], [608, 502, 18, 3], [608, 512, 18, 3], [608, 522, 18, 3]]);
rects(front, '#4020b0', [[499, 490, 8, 52], [594, 490, 8, 52]]);
for (let row = 0; row < 4; row++) {
    for (let col = 0; col < 6; col++) {
        rects(front, '#a0f0d8', [[513 + col * 14, 494 + row * 12, 6, 6]]);
    }
}
path(front, 'M500 122V330', '#888');
path(front, 'M480 330H708', '#d01010');
label(front, 497, 120, 'z', '#888');
label(front, 497, 326, 'y', '#c00000');
label(front, 702, 326, 'x', '#c00000');
diamonds(front, [[558, 134, 15, 15], [563, 211, 15, 13], [566, 313, 14, 11], [569, 411, 15, 13], [570, 530, 15, 15], [111, 530, 15, 15], [236, 530, 14, 15], [250, 530, 13, 15], [883, 530, 12, 14], [269, 416, 14, 12], [280, 416, 13, 13]]);
boxes(front, [[413, 213, 11, 22], [456, 213, 11, 30], [457, 213, 10, 5], [659, 211, 9, 20], [265, 313, 12, 0], [346, 313, 11, 0], [356, 313, 11, 0], [772, 313, 10, 3], [156, 416, 11, -22], [849, 410, 10, 18]]);
path(front, 'M57 625V572', '#0000d0');
path(front, 'M57 625H110', '#c00000');
label(front, 57, 570, 'z', '#0000d0');
label(front, 55, 624, 'y', '#00b000');
label(front, 106, 624, 'x', '#c00000');

const left = document.getElementById('left');
dome(left, 502, 496, 315, -0.04);
path(left, 'M273 487H656', '#9cc878');
path(left, 'M646 487h10', '#0000e0');
rects(left, '#8fe6e0', [[470, 452, 78, 34]]);
rects(left, '#00843c', [[480, 458, 60, 28], [540, 462, 10, 24]]);
rects(left, '#8a8a20', [[470, 450, 26, 5], [518, 450, 26, 5]]);
rects(left, '#3020a0', [[484, 462, 8, 12], [498, 462, 8, 12], [512, 460, 18, 12]]);
path(left, 'M551 375V168M532 187L551 168L570 187', '#777');
path(left, 'M342 376H570', '#e00000');
label(left, 549, 164, 'z', '#888');
label(left, 340, 370, 'y', '#c00000');
label(left, 549, 370, 'x', '#c00000');
diamonds(left, [[494, 271, 14, 14], [514, 313, 15, 12], [515, 366, 15, 10], [517, 420, 15, 12], [517, 481, 14, 15], [348, 481, 12, 14], [679, 481, 15, 15], [680, 481, 10, 15], [749, 481, 15, 15]]);
boxes(left, [[458, 314, 9, 18], [564, 313, 10, 10], [567, 313, 10, 28], [587, 312, 10, 18], [404, 366, 10, 0], [619, 366, 10, 0], [624, 366, 10, 0], [668, 366, 12, 0], [365, 419, 9, 20], [659, 418, 10, 22], [664, 420, 10, 12], [723, 418, 11, 25]]);
path(left, 'M57 631V575', '#0000d0');
path(left, 'M6 631H57', '#009000');
label(left, 57, 576, 'z', '#0000d0');
label(left, 5, 628, 'y', '#00b000');
label(left, 54, 628, 'x', '#c00000');
add(left, 'text', { x: 698, y: 608, class: 'caption' }, '天球');

const plan = document.getElementById('top');
add(plan, 'circle', { cx: 483, cy: 471, r: 582, fill: 'none', stroke: '#780000', 'stroke-width': 3 });
path(plan, 'M148 44H878V748H148Z', '#9cc878');
path(plan, 'M157 204L345 197V352L338 356H157ZM367 187L573 190V355H367ZM590 187L777 198V356H600L590 348ZM155 391H345V556L335 567H155ZM161 583H348V750L161 741ZM369 577L577 573V741H369ZM590 573L775 571V721L590 731ZM598 391H775V558H598Z', '#0000e8');
path(plan, 'M345 391L367 410H388M367 415V492H388V565H350M348 391H575L590 382M575 391V565H600M505 392V408M514 392V408M370 565H575M367 583V740', '#0000e8');
path(plan, 'M163 210L342 206V349H163ZM373 194L567 196V349H373ZM596 200L770 203V349H596ZM163 397H341V562H163ZM168 589L344 590V736L170 738ZM374 585L572 578V735L374 737ZM596 578L769 577V718L596 721ZM613 397H768V550H613ZM157 372H308M622 372H770', '#90005c');
add(plan, 'path', { d: 'M162 377H308M622 377H768M403 368H542M403 377H542', stroke: '#d8a0c8', 'stroke-width': 4, 'stroke-dasharray': '9 6' });
rects(plan, '#dca0e8', [[313, 316, 17, 74], [383, 318, 16, 72], [543, 316, 17, 74], [605, 316, 17, 74], [347, 293, 19, 19], [573, 293, 16, 17], [345, 392, 24, 16], [575, 399, 15, 17], [347, 549, 22, 18], [575, 529, 14, 17], [309, 569, 18, 12], [351, 589, 15, 17], [547, 561, 17, 11], [605, 560, 17, 10], [574, 590, 14, 14]]);
// library building in the middle
rects(plan, '#00903c', [[403, 425, 31, 100], [550, 428, 8, 98]]);
path(plan, 'M436 430V522M442 430V522M450 428V524M530 448L556 428M530 500L556 526M538 463h18v24h-18zM430 520H540V546H430ZM472 524h16v20h-16z', '#00903c');
path(plan, 'M404 412H556M404 542H556M406 412C430 470 530 470 556 412M404 542C430 482 530 482 556 542M440 530H530M548 470h18v11h-18z', '#b0f0f0', 4);
add(plan, 'path', { d: 'M393 424V454M393 500V532M422 558H540M440 536H530', stroke: '#d8a0c8', 'stroke-width': 4, 'stroke-dasharray': '5 8' });
path(plan, 'M430 520H540M530 520V540', '#888');
rects(plan, '#b0f0f0', [[473, 547, 15, 10]]);
path(plan, 'M439 430V520', '#e090d0');
path(plan, 'M430 579V530', '#777');
path(plan, 'M430 545V350M412 368L430 350L448 368M430 559H638M618 538L638 559L618 578', '#c80000');
label(plan, 427, 350, 'y', '#d00000');
label(plan, 634, 556, 'x', '#d00000');
diamonds(plan, [[52, 495, 22, 22], [97, 494, 21, 21], [203, 492, 15, 21], [348, 488, 20, 21], [487, 454, 21, 21], [492, 621, 22, 19], [495, 772, 23, 15], [498, 875, 21, 19], [499, 921, 22, 21]]);
boxes(plan, [[172, 184, 16, 0], [205, 215, 15, 0], [282, 287, 13, 10], [386, 388, 15, 8], [392, 586, 15, 0], [587, 578, 15, 0], [291, 692, 13, 80], [697, 683, 13, 10], [218, 769, 15, 0], [188, 802, 16, 0], [772, 754, 16, 0], [805, 786, 16, 0]]);
path(plan, 'M-12 1183V1130', '#009000');
path(plan, 'M-12 1183H40', '#c00000');
label(plan, -12, 1134, 'y', '#00b000');
label(plan, 38, 1190, 'x', '#c00000');
label(plan, -18, 1198, 'z', '#0000d0');
```
